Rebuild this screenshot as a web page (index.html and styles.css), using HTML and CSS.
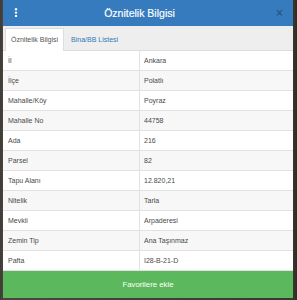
FILE: index.html
```html
<!DOCTYPE html>
<html lang="tr">
<head>
<meta charset="utf-8">
<link rel="stylesheet" href="styles.css">
</head>
<body>
<div class="backdrop">
  <div class="modal">
    <div class="modal-header">
      <span class="menu">
        <svg width="4" height="10" viewBox="0 0 4 10"><circle cx="2" cy="1.3" r="1.2" fill="#fff"/><circle cx="2" cy="4.6" r="1.2" fill="#fff"/><circle cx="2" cy="7.9" r="1.2" fill="#fff"/></svg>
      </span>
      <span class="title">Öznitelik Bilgisi</span>
      <span class="close">×</span>
    </div>
    <div class="tabs">
      <span class="tab active">Öznitelik Bilgisi</span>
      <span class="tab">Bina/BB Listesi</span>
    </div>
    <div class="table">
      <div class="row"><span class="key">İl</span><span class="val">Ankara</span></div>
      <div class="row alt"><span class="key">İlçe</span><span class="val">Polatlı</span></div>
      <div class="row"><span class="key">Mahalle/Köy</span><span class="val">Poyraz</span></div>
      <div class="row alt"><span class="key">Mahalle No</span><span class="val">44758</span></div>
      <div class="row"><span class="key">Ada</span><span class="val">216</span></div>
      <div class="row alt"><span class="key">Parsel</span><span class="val">82</span></div>
      <div class="row"><span class="key">Tapu Alanı</span><span class="val">12.820,21</span></div>
      <div class="row alt"><span class="key">Nitelik</span><span class="val">Tarla</span></div>
      <div class="row"><span class="key">Mevkii</span><span class="val">Arpaderesi</span></div>
      <div class="row alt"><span class="key">Zemin Tip</span><span class="val">Ana Taşınmaz</span></div>
      <div class="row"><span class="key">Pafta</span><span class="val">I28-B-21-D</span></div>
    </div>
    <div class="fav">Favorilere ekle</div>
  </div>
</div>
</body>
</html>
```
FILE: styles.css
```css
html, body {
  margin: 0;
  padding: 0;
}
body {
  width: 297px;
  height: 300px;
  overflow: hidden;
  font-family: "Liberation Sans", Arial, sans-serif;
  background: linear-gradient(90deg, #3f3b35 0px, #4a453e 3px, #3a362f 293px, #2f2b26 297px);
}
.backdrop {
  padding-left: 3px;
}
.modal {
  width: 290px;
  background: #fff;
  display: flex;
  flex-direction: column;
}
.modal-header {
  height: 26px;
  background: #367bbd;
  display: flex;
  align-items: center;
}
.menu {
  width: 4px;
  height: 10px;
  margin-left: 11px;
  display: flex;
}
.title {
  flex: 1;
  text-align: center;
  color: #fff;
  font-size: 10.5px;
  margin-left: -5px;
  margin-right: 10px;
  -webkit-text-stroke: 0.15px #fff;
}
.close {
  color: rgba(30, 45, 70, 0.45);
  font-size: 12px;
  font-weight: bold;
  margin-right: 10px;
  line-height: 1;
}
.tabs {
  height: 24px;
  background: #eeeeee;
  border-bottom: 1px solid #dddddd;
  display: flex;
  align-items: flex-end;
  padding-left: 2px;
}
.tab {
  height: 22px;
  line-height: 21px;
  padding: 0 6px;
  font-size: 7px;
  color: #337ab7;
  margin-bottom: -1px;
  border: 1px solid transparent;
  border-bottom: none;
}
.tab.active {
  background: #fff;
  color: #555;
  border-color: #dddddd;
  padding: 0 5px;
}
.table {
  display: flex;
  flex-direction: column;
}
.row {
  height: 19px;
  border-bottom: 1px solid #e2e2e2;
  display: grid;
  grid-template-columns: 137px 1fr;
  font-size: 7px;
  color: #4a4a4a;
  background: #fff;
}
.row.alt {
  background: #f7f7f7;
}
.key, .val {
  display: flex;
  align-items: center;
  padding-left: 5px;
}
.key {
  border-right: 1px solid #e2e2e2;
}
.val {
  padding-left: 4px;
}
.fav {
  height: 27px;
  background: #5cb85c;
  color: #fff;
  font-size: 7.8px;
  display: flex;
  align-items: center;
  justify-content: center;
}
```
